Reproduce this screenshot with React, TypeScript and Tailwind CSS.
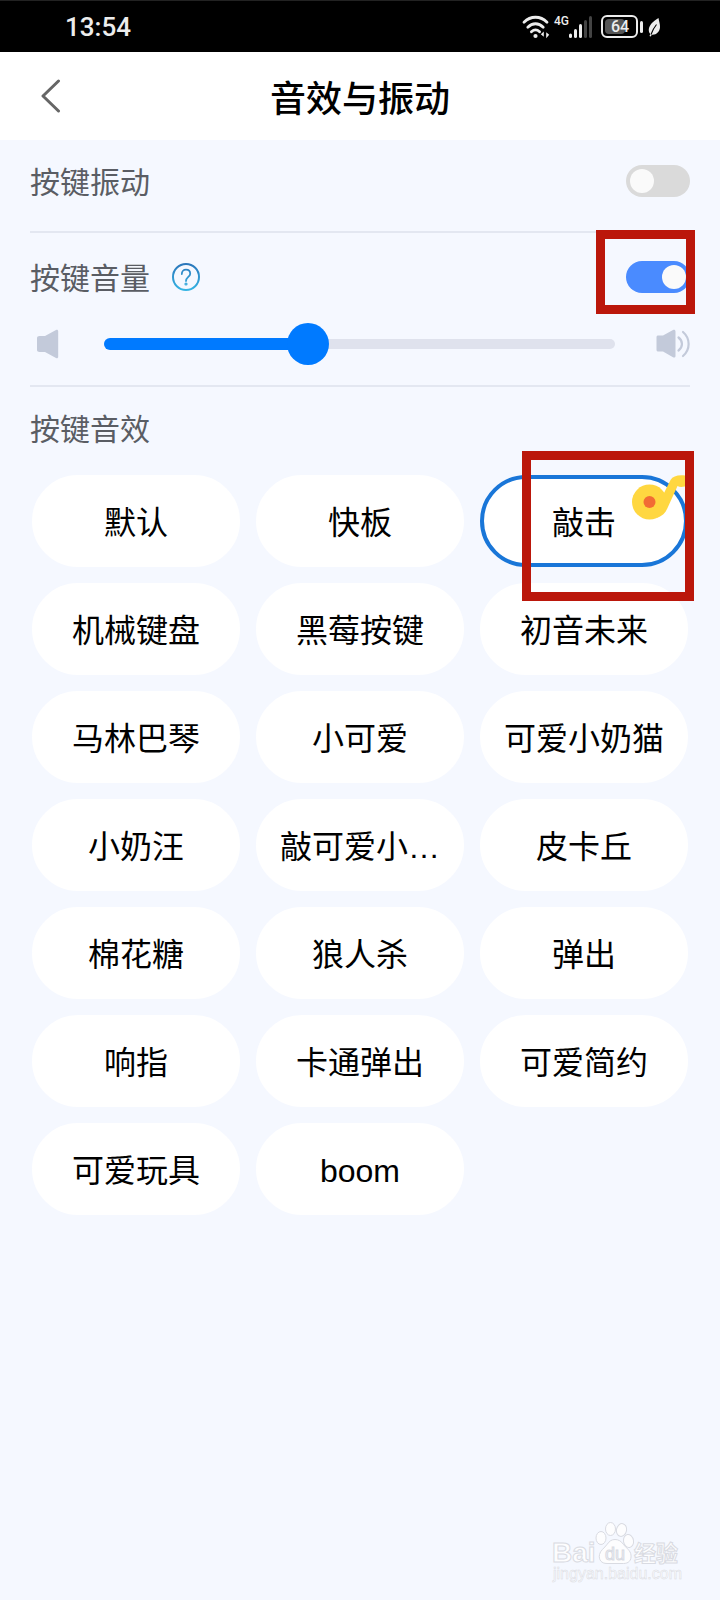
import React, { useState } from 'react'

const sounds = [
    '默认', '快板', '敲击',
    '机械键盘', '黑莓按键', '初音未来',
    '马林巴琴', '小可爱', '可爱小奶猫',
    '小奶汪', '敲可爱小…', '皮卡丘',
    '棉花糖', '狼人杀', '弹出',
    '响指', '卡通弹出', '可爱简约',
    '可爱玩具', 'boom',
]

const StatusBar = () => (
    <div className="flex h-[52px] items-center justify-between border-t border-[#222] bg-black pl-[65px] pr-[59px] font-[Roboto,sans-serif] text-[#ededed]">
        <span className="text-[26px] font-medium leading-8">13:54</span>
        <div className="flex items-center">
            {/* wifi */}
            <svg width="28" height="24" viewBox="0 0 28 24" fill="none" stroke="#ededed" strokeWidth="2.8" strokeLinecap="round">
                <path d="M2 7.2C8.6.6 18.4.6 25 7.2" />
                <path d="M5.8 12.2c4.6-4.6 10.8-4.6 15.4 0" />
                <path d="M9.4 16.8c2.6-2.4 5.6-2.4 8.2 0" />
                <circle cx="13.5" cy="21" r="2.1" fill="#ededed" stroke="none" />
                <path d="M21.8 16.4v5.4l-3-2.6zM24.2 17.2v6l3-3.4z" fill="#ededed" stroke="none" />
            </svg>
            <span className="ml-1 self-start text-[12px] font-medium leading-3">4G</span>
            {/* signal */}
            <svg width="24" height="24" viewBox="0 0 24 24" fill="#ededed">
                <rect x="0" y="18.5" width="3" height="4.5" rx="1.5" />
                <rect x="5" y="14" width="3" height="9" rx="1.5" />
                <rect x="10" y="9" width="3" height="14" rx="1.5" />
                <rect x="15" y="5" width="3" height="18" rx="1.5" fill="#444" />
                <rect x="20" y="1" width="3" height="22" rx="1.5" fill="#444" />
            </svg>
            <div className="ml-2 flex h-[23px] w-[37px] items-center rounded-md border-2 border-[#ededed] p-0.5">
                <div className="flex h-full w-5 rounded-sm bg-[#555]">
                    <span className="ml-1.5 self-center text-[16px] font-medium leading-4">64</span>
                </div>
            </div>
            <div className="ml-0.5 h-3 w-[3px] rounded-sm bg-[#ededed]" />
            {/* leaf */}
            <svg className="ml-[5px]" width="13" height="20" viewBox="0 0 13 20">
                <path d="M10.5 1C4 5 .5 9 .8 13.600c.1 1.600.7 2.700 1.500 3.500L1.500 19l1.300.5.9-1.800c4.500.5 8-2.700 8.300-7.400C12.200 7 11 4.500 10.500 1z" fill="#ededed" />
                <path d="M8.500 7.500C6.500 10 4.500 13 3 17.500" stroke="#000" strokeWidth="1.100" fill="none" />
            </svg>
        </div>
    </div>
)

const Switch = ({ id, checked, onChange }: { id: string; checked: boolean; onChange: (v: boolean) => void }) => (
    <input
        id={id}
        type="checkbox"
        role="switch"
        checked={checked}
        onChange={(e) => onChange(e.target.checked)}
        className="block h-8 w-16 cursor-pointer appearance-none rounded-full bg-[#dadada] p-1 before:block before:size-6 before:rounded-full before:bg-[#fafafa] checked:bg-[#4a8bff] checked:before:translate-x-8"
    />
)

const Speaker = ({ loud }: { loud?: boolean }) => (
    <svg width={loud ? 34 : 22} height="30" viewBox={loud ? '0 0 34 30' : '0 0 22 30'} fill="#c3cada">
        {loud ? (
            <>
                <path d="M2.500 6.500H7L17 1c1.200-.6 2.500 0 2.500 1.500v24.500c0 1.500-1.300 2-2.500 1.300L7 22.500H2.500C1 22.500.5 22 .5 20.500v-12c0-1.500.5-2 2-2z" />
                <path d="M22.500 8.500c4.600 3.500 4.600 9.500 0 13M27 3c7.500 6.500 7.500 17.500 0 24" fill="none" stroke="#c3cada" strokeWidth="2.200" strokeLinecap="round" />
            </>
        ) : (
            <path d="M2.500 7H8L19 1c1.200-.6 2.200 0 2.200 1.300v25.400c0 1.300-1 1.900-2.200 1.300L8 23H2.500C1 23 0 22.300 0 21V9c0-1.300 1-2 2.500-2z" />
        )}
    </svg>
)

const NoteBadge = () => (
    <svg className="pointer-events-none absolute left-[152px] top-0" width="53" height="45" viewBox="0 0 53 45">
        <path d="M31 20L38.500 5C41 1 46-.3 53 .5V11.500c-3.500.6-5.500.6-7.500-.5L35.500 33C33.500 38 30 41 25 43z" fill="#ffd740" />
        <circle cx="17.500" cy="27" r="17.500" fill="#ffd740" />
        <circle cx="17.500" cy="27" r="6" fill="#f26b34" />
    </svg>
)

const Watermark = () => (
    <svg className="mr-9 mt-auto self-end" width="134" height="86" viewBox="0 0 134 86" fill="#fdfdfe" stroke="#d9dbe2" strokeWidth="1" fontFamily="'Liberation Sans', 'Noto Sans CJK SC', sans-serif">
        <text x="2" y="48" fontSize="28" fontWeight="700">Bai</text>
        <path d="M65 25.500c3.500 0 6 1.500 8.500 5 2.500 3.300 7 6 7.500 10.500.6 5.500-2.500 8.500-7.500 8.500H57c-5.500 0-8.500-3.500-7.500-9 .7-4 5-6.500 7.500-10 2.500-3.500 4.500-5 8-5z" />
        <ellipse cx="51" cy="24" rx="5" ry="6.500" />
        <ellipse cx="60.500" cy="15" rx="5" ry="6.500" />
        <ellipse cx="71.500" cy="16" rx="5" ry="6.500" transform="rotate(12 71.500 16)" />
        <ellipse cx="78.500" cy="27" rx="5" ry="6.500" transform="rotate(-10 78.500 27)" />
        <text x="55" y="46" fontSize="18" fill="#f4f7fe">du</text>
        <text x="84" y="47" fontSize="22" fontWeight="700">经验</text>
        <text x="3" y="65" fontSize="16" strokeWidth="0.500">jingyan.baidu.com</text>
    </svg>
)

export default function App() {
    const [vibrate, setVibrate] = useState(false)
    const [volumeOn, setVolumeOn] = useState(true)
    const [volume, setVolume] = useState(39)
    const [selected, setSelected] = useState('敲击')

    return (
        <div className="flex min-h-screen flex-col bg-[#f5f8ff] font-['Noto_Sans_CJK_SC',sans-serif]">
            <StatusBar />
            <header className="grid h-[88px] grid-cols-[1fr_auto_1fr] items-center bg-white">
                <button aria-label="返回" className="ml-10 w-6">
                    <svg width="22" height="34" viewBox="0 0 22 34" fill="none" stroke="#666" strokeWidth="3" strokeLinecap="round" strokeLinejoin="round">
                        <path d="M18.500 2L3 17l15.500 15" />
                    </svg>
                </button>
                <h1 className="text-[36px] font-medium leading-10 text-black">音效与振动</h1>
            </header>

            <main className="px-[30px] text-[#5a5d64]">
                <section className="flex h-[93px] items-center justify-between border-b-2 border-[#e3e7f1] pb-2.5">
                    <label htmlFor="vibrate" className="pb-0.5 text-[30px] leading-9">按键振动</label>
                    <Switch id="vibrate" checked={vibrate} onChange={setVibrate} />
                </section>

                <section className="border-b-2 border-[#e3e7f1] pb-5 pt-7">
                    <div className="flex h-8 items-center justify-between">
                        <div className="flex items-center gap-[21px]">
                            <label htmlFor="volume-on" className="pb-0.5 text-[30px] leading-9">按键音量</label>
                            <button aria-label="帮助">
                                <svg width="30" height="30" viewBox="0 0 30 30" fill="none" stroke="url(#help)" strokeWidth="2" strokeLinecap="round">
                                    <defs>
                                        <linearGradient id="help" x1="0" y1="0" x2="0" y2="30" gradientUnits="userSpaceOnUse">
                                            <stop stopColor="#2a72b8" />
                                            <stop offset="1" stopColor="#35b8e6" />
                                        </linearGradient>
                                    </defs>
                                    <circle cx="15" cy="15" r="13" />
                                    <path d="M10.800 12c0-2.600 1.800-4.300 4.200-4.300s4.200 1.600 4.200 4c0 3-4.200 3.600-4.200 7.300" strokeWidth="1.800" />
                                    <circle cx="15" cy="22" r=".6" />
                                </svg>
                            </button>
                        </div>
                        <div className="relative">
                            <Switch id="volume-on" checked={volumeOn} onChange={setVolumeOn} />
                            <div className="pointer-events-none absolute -left-[30px] -top-[31px] h-[84px] w-[99px] border-[9px] border-[#bb170b]" />
                        </div>
                    </div>
                    <div className="mt-[30px] flex h-[42px] items-center">
                        <div className="w-[74px] pl-[7px]"><Speaker /></div>
                        <div className="grid flex-1 items-center">
                            <div className="col-start-1 row-start-1 h-2.5 rounded-full bg-[#dfe2ed]" />
                            <div className="col-start-1 row-start-1 h-3 rounded-full bg-[#007aff]" style={{ width: `calc(21px + (100% - 42px) * ${volume / 100})` }} />
                            <input
                                type="range"
                                aria-label="按键音量"
                                value={volume}
                                onChange={(e) => setVolume(Number(e.target.value))}
                                className="col-start-1 row-start-1 h-[42px] w-full cursor-pointer appearance-none bg-transparent [&::-webkit-slider-thumb]:size-[42px] [&::-webkit-slider-thumb]:appearance-none [&::-webkit-slider-thumb]:rounded-full [&::-webkit-slider-thumb]:bg-[#007aff]"
                            />
                        </div>
                        <div className="flex w-[75px] justify-end"><Speaker loud /></div>
                    </div>
                </section>

                <h2 className="pt-5.5 text-[30px] leading-9">按键音效</h2>
                <div className="mx-0.5 mt-7.5 grid grid-cols-3 gap-4 font-['Liberation_Sans','Noto_Sans_CJK_SC',sans-serif] text-black">
                    {sounds.map((name) => (
                        <div key={name} className="relative">
                            <button
                                aria-pressed={selected === name}
                                onClick={() => setSelected(name)}
                                className={selected === name
                                    ? 'h-[92px] w-full rounded-full border-4 border-[#1976d8] bg-white pt-1 text-[32px] leading-10'
                                    : 'h-[92px] w-full rounded-full border-4 border-white bg-white pt-1 text-[32px] leading-10'}
                            >
                                {name}
                            </button>
                            {name === '敲击' && (
                                <>
                                    <NoteBadge />
                                    <div className="pointer-events-none absolute -top-6 left-[42px] z-10 h-[150px] w-[172px] border-[9px] border-[#bb170b]" />
                                </>
                            )}
                        </div>
                    ))}
                </div>
            </main>
            <Watermark />
        </div>
    )
}
